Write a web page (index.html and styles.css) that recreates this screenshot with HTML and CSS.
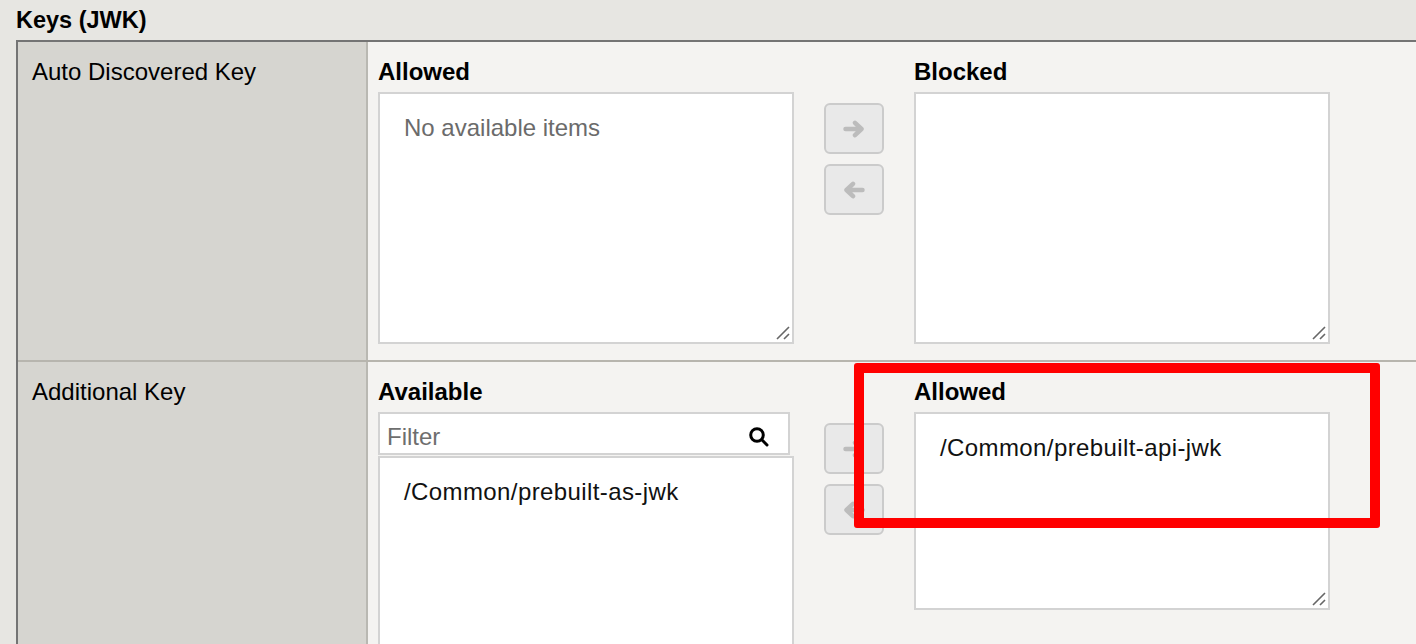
FILE: index.html
```html
<!DOCTYPE html>
<html>
<head>
<meta charset="utf-8">
<title>Keys (JWK)</title>
<link rel="stylesheet" href="styles.css">
</head>
<body>
<div class="page">
  <h2 class="section-title">Keys (JWK)</h2>
  <div class="props">
    <div class="row">
      <div class="label">Auto Discovered Key</div>
      <div class="value">
        <div class="dual">
          <div class="pane">
            <div class="pane-title">Allowed</div>
            <div class="listbox lb-tall">
              <div class="empty">No available items</div>
              <svg class="grip" viewBox="0 0 14 14"><path d="M1 13 L13 1 M8 13 L13 8"/></svg>
            </div>
          </div>
          <div class="movers">
            <button class="mover" type="button">
              <svg class="arrow" viewBox="0 0 22 18"><path d="M2.5 9 H18.5 M12 2.8 L18.5 9 L12 15.2"/></svg>
            </button>
            <button class="mover" type="button">
              <svg class="arrow" viewBox="0 0 22 18"><path d="M19.5 9 H3.5 M10 2.8 L3.5 9 L10 15.2"/></svg>
            </button>
          </div>
          <div class="pane">
            <div class="pane-title">Blocked</div>
            <div class="listbox lb-tall">
              <svg class="grip" viewBox="0 0 14 14"><path d="M1 13 L13 1 M8 13 L13 8"/></svg>
            </div>
          </div>
        </div>
      </div>
    </div>
    <div class="row">
      <div class="label">Additional Key</div>
      <div class="value">
        <div class="dual">
          <div class="pane">
            <div class="pane-title">Available</div>
            <div class="filter">
              <input class="filter-input" type="text" placeholder="Filter">
              <svg class="search" viewBox="0 0 22 22"><circle cx="9" cy="9" r="6.3"/><path d="M13.8 13.8 L19 19"/></svg>
            </div>
            <div class="listbox lb-avail">
              <div class="item">/Common/prebuilt-as-jwk</div>
            </div>
          </div>
          <div class="movers">
            <button class="mover" type="button">
              <svg class="arrow" viewBox="0 0 22 18"><path d="M2.5 9 H18.5 M12 2.8 L18.5 9 L12 15.2"/></svg>
            </button>
            <button class="mover" type="button">
              <svg class="arrow" viewBox="0 0 22 18"><path d="M19.5 9 H3.5 M10 2.8 L3.5 9 L10 15.2"/></svg>
            </button>
          </div>
          <div class="pane">
            <div class="pane-title">Allowed</div>
            <div class="listbox lb-allowed">
              <div class="item">/Common/prebuilt-api-jwk</div>
              <svg class="grip" viewBox="0 0 14 14"><path d="M1 13 L13 1 M8 13 L13 8"/></svg>
            </div>
          </div>
        </div>
        <div class="highlight"></div>
      </div>
    </div>
  </div>
</div>
</body>
</html>
```

FILE: styles.css
```css
html, body {
  margin: 0;
  padding: 0;
}

body {
  background: #e7e6e2;
  font-family: "Liberation Sans", Arial, Helvetica, sans-serif;
  color: #000;
  overflow: hidden;
  height: 644px;
}

.section-title {
  margin: 0;
  padding: 6px 16px;
  font-size: 23.5px;
  line-height: 28px;
  font-weight: bold;
}

.props {
  margin-left: 16px;
  width: 1420px;
  border-top: 2px solid #747474;
  border-left: 2px solid #747474;
}

.row {
  display: flex;
}

.row + .row {
  border-top: 2px solid #b7b5ae;
}

.label {
  box-sizing: border-box;
  width: 350px;
  flex: none;
  padding: 16px 0 0 14px;
  background: #d6d5d0;
  border-right: 2px solid #b9b8b2;
  font-size: 24px;
  line-height: 28px;
}

.value {
  flex: 1;
  position: relative;
  background: #f4f3f1;
  padding: 16px 0 16px 10px;
}

.dual {
  display: flex;
  align-items: flex-start;
}

.pane {
  width: 416px;
  flex: none;
}

.pane-title {
  font-weight: bold;
  font-size: 24px;
  line-height: 28px;
  margin-bottom: 6px;
}

.listbox {
  position: relative;
  box-sizing: border-box;
  background: #fff;
  border: 2px solid #d3d3d3;
  padding: 20px 24px 19px;
  font-size: 24px;
  line-height: 28px;
}

.lb-tall {
  height: 252px;
}

.lb-avail {
  height: 230px;
  margin-top: 1px;
}

.lb-allowed {
  height: 198px;
}

.empty {
  color: #6b6b6b;
}

.item {
  color: #111;
  letter-spacing: 0.4px;
}

.grip {
  position: absolute;
  right: 2px;
  bottom: 2px;
  width: 14px;
  height: 14px;
}

.grip path {
  fill: none;
  stroke: #676767;
  stroke-width: 1.6;
}

.movers {
  flex: none;
  width: 60px;
  margin: 45px 30px 0;
  display: flex;
  flex-direction: column;
  gap: 10px;
}

.mover {
  box-sizing: border-box;
  width: 60px;
  height: 51px;
  padding: 0;
  border: 2px solid #cbcbcb;
  border-radius: 6px;
  background: #e9e9e9;
  display: flex;
  align-items: center;
  justify-content: center;
}

.arrow {
  width: 22px;
  height: 18px;
}

.arrow path {
  fill: none;
  stroke: #bcbcbc;
  stroke-width: 4.5;
  stroke-linecap: round;
  stroke-linejoin: round;
}

.filter {
  box-sizing: border-box;
  width: 412px;
  height: 43px;
  display: flex;
  align-items: center;
  background: #fff;
  border: 2px solid #d3d3d3;
  padding: 0 18px 0 7px;
}

.filter-input {
  flex: 1;
  min-width: 0;
  border: none;
  outline: none;
  padding: 0;
  margin: 0;
  background: transparent;
  font-family: "Liberation Sans", Arial, Helvetica, sans-serif;
  font-size: 24px;
  line-height: 28px;
  color: #000;
  margin-top: 6px;
}

.filter-input::placeholder {
  color: #6e6e6e;
}

.search {
  flex: none;
  width: 22px;
  height: 22px;
  margin-top: 6px;
}

.search circle,
.search path {
  fill: none;
  stroke: #000;
  stroke-width: 3;
  stroke-linecap: round;
}

.highlight {
  position: absolute;
  top: 1px;
  left: 486px;
  width: 526px;
  height: 165px;
  box-sizing: border-box;
  border: 10px solid #ff0000;
  border-radius: 3px;
}
```
